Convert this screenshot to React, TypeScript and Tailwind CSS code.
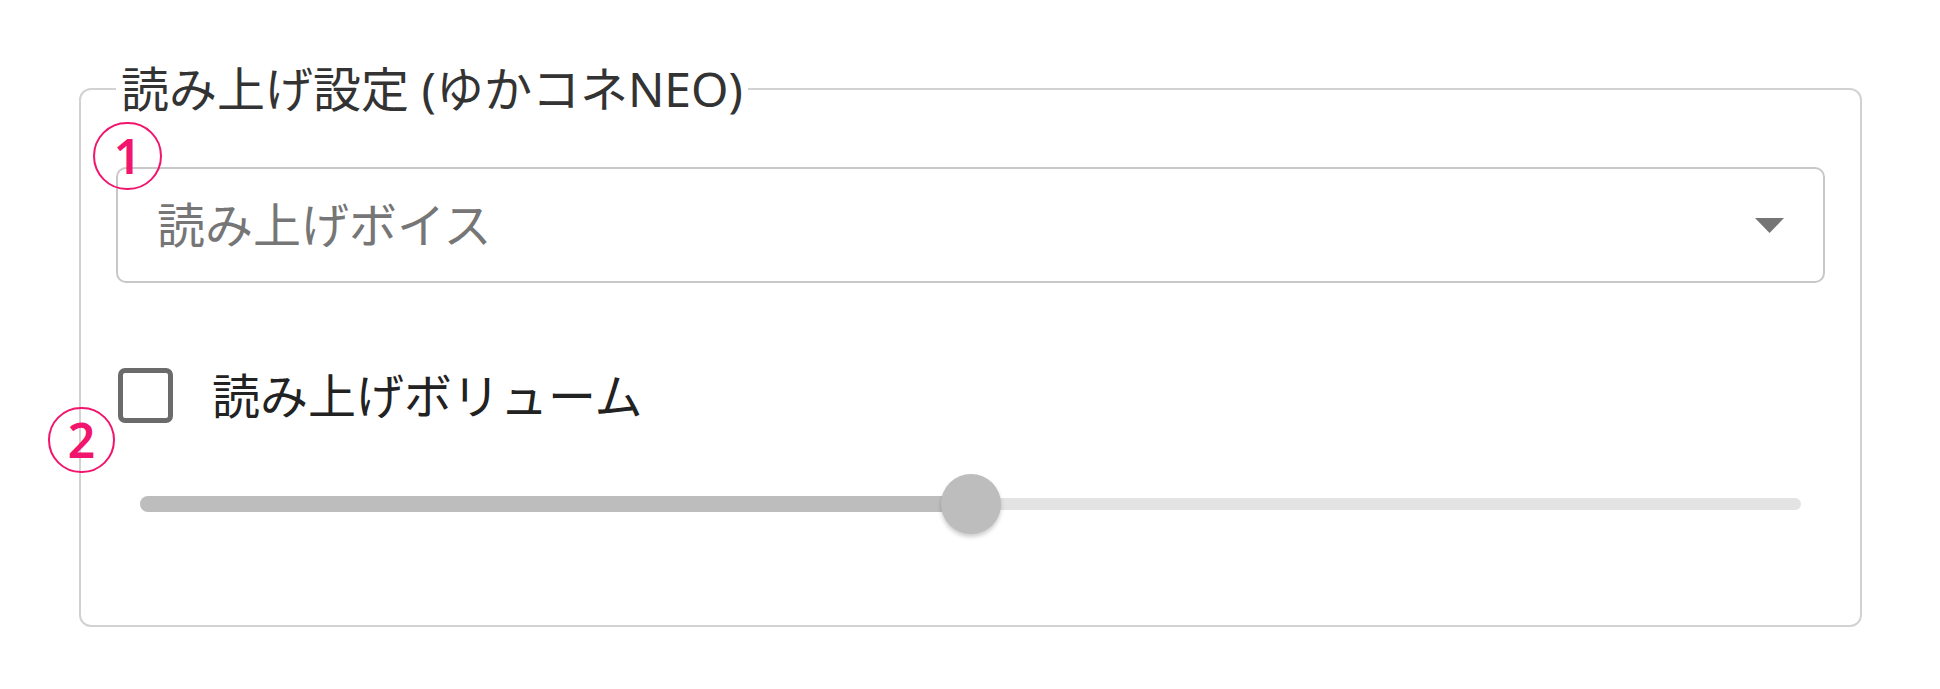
const FONT = "font-['Noto_Sans','Noto_Sans_CJK_JP',sans-serif]";

/** 注釈用の丸数字（赤丸） */
function Marker({ n, className }: { n: string; className: string }) {
  return (
    <div
      className={`absolute flex items-center justify-center rounded-full border-2 border-[#f2156d] text-[48px] leading-none font-semibold text-[#f2156d] ${className}`}
    >
      {n}
    </div>
  );
}

export default function App() {
  const volume = 50;

  return (
    <div className={`h-[689px] w-[1940px] overflow-hidden bg-white ${FONT}`}>
      <div className="relative ml-[79px] w-[1783px] pt-[60px]">
        <fieldset className="rounded-[12px] border-2 border-[#d2d2d2] px-[35px] pt-[49px] pb-[91px]">
          <legend className="px-[5px] text-[48px] leading-[58px] text-[#333]">
            読み上げ設定 (ゆかコネNEO)
          </legend>

          {/* 読み上げボイス */}
          <div className="flex h-[116px] items-center justify-between rounded-[10px] border-2 border-[#c8c8c8] pr-[39px] pl-[39px]">
            <span className="text-[48px] leading-none text-[#767676]">読み上げボイス</span>
            <svg width="29" height="15" viewBox="0 0 29 15">
              <polygon points="0,0 29,0 14.5,15" fill="#757575" />
            </svg>
          </div>

          {/* 読み上げボリューム */}
          <div className="mt-[85px] flex h-[55px] items-center">
            <div className="ml-[2px] size-[55px] rounded-[7px] border-[5px] border-[#6b6b6b]" />
            <span className="ml-[39px] text-[48px] leading-none text-[#222]">
              読み上げボリューム
            </span>
          </div>

          <div className="relative mx-[24px] mt-[51px] flex h-[60px] items-center">
            <div className="h-[12px] w-full rounded-full bg-[#e3e3e3]" />
            <div
              className="absolute left-0 h-[16px] rounded-full bg-[#bdbdbd]"
              style={{ width: `${volume}%` }}
            />
            <div
              className="absolute top-0 size-[60px] rounded-full bg-[#bdbdbd] shadow-[0_3px_4px_rgba(0,0,0,0.2)]"
              style={{ left: `calc(${volume}% - 30px)` }}
            />
          </div>
        </fieldset>

        <Marker n="1" className="top-[122px] left-[14px] h-[68px] w-[69px]" />
        <Marker n="2" className="top-[407px] left-[-31px] h-[66px] w-[67px]" />
      </div>
    </div>
  );
}
